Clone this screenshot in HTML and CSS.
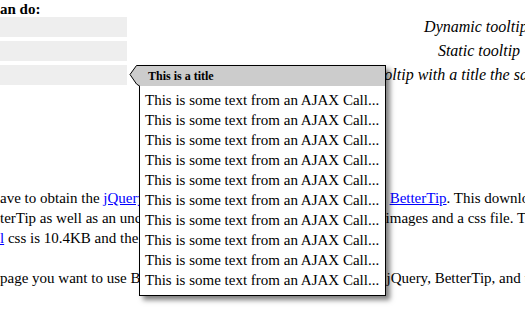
FILE: index.html
```html
<!DOCTYPE html>
<html lang="en">
<head>
    <meta charset="UTF-8">
    <title>BetterTip</title>
<link rel="stylesheet" href="styles.css">
</head>
<body>
    <div class="page">
        <p class="lead">an do:</p>

        <div class="demos">
            <div class="demo-cell"></div>
            <div class="demo-label">Dynamic tooltips</div>
            <div class="demo-cell"></div>
            <div class="demo-label">Static tooltip</div>
            <div class="demo-cell"></div>
            <div class="demo-label">Static tooltip with a title the same as the links.</div>
        </div>

        <div class="usage">
            <p>ave to obtain the <a href="#">jQuery</a> library from the official jQuery site and <a href="#">BetterTip</a>. This download includes a<br>terTip as well as an uncompressed version, along with all of the images and a css file. The compressed<br><a href="#">l</a> css is 10.4KB and the uncompressed version is 22KB.</p>
            <p>page you want to use BetterTip on you will first need to include jQuery, BetterTip, and the css file.</p>
        </div>
    </div>

    <div class="tip">
        <svg class="tip-arrow" width="11" height="22" viewBox="0 0 11 22">
            <polygon points="11,0.5 7.5,0.5 1,9.5 7.5,19 11,21" fill="#cccccc"/>
            <polyline points="11,0.5 7.5,0.5 1,9.5 7.5,19 10.5,21" fill="none" stroke="#000" stroke-width="1"/>
        </svg>
        <div class="tip-title">This is a title</div>
        <div class="tip-body">
            This is some text from an AJAX Call...<br>
            This is some text from an AJAX Call...<br>
            This is some text from an AJAX Call...<br>
            This is some text from an AJAX Call...<br>
            This is some text from an AJAX Call...<br>
            This is some text from an AJAX Call...<br>
            This is some text from an AJAX Call...<br>
            This is some text from an AJAX Call...<br>
            This is some text from an AJAX Call...<br>
            This is some text from an AJAX Call...
        </div>
    </div>
</body>
</html>
```

FILE: styles.css
```css
html, body {
    overflow: hidden;
}

body {
    margin: 0;
    font-family: "Liberation Serif", "Times New Roman", serif;
    font-size: 15px;
    color: #000;
    background: #fff;
}

.page {
    padding-top: 1px;
}

.lead {
    margin: 0;
    font-weight: bold;
    line-height: 16px;
}

.demos {
    display: grid;
    grid-template-columns: 127px 696px;
    column-gap: 4px;
    row-gap: 4px;
}

.demo-cell {
    height: 20px;
    background-color: #eeeeee;
}

.demo-label {
    font-size: 16px;
    line-height: 20px;
    font-style: italic;
    text-align: center;
    white-space: nowrap;
}

.usage {
    margin-top: 103px;
}

.usage p {
    margin: 0 0 20px;
    line-height: 20px;
    white-space: nowrap;
}

a {
    color: #0000ff;
    text-decoration: underline;
}

.tip {
    position: absolute;
    left: 139px;
    top: 65px;
    width: 247px;
    box-sizing: border-box;
    border: 1px solid #000;
    background: #fff;
    box-shadow: 4px 4px 5px rgba(0, 0, 0, 0.5);
}

.tip-arrow {
    position: absolute;
    left: -11px;
    top: -1px;
    display: block;
}

.tip-title {
    height: 20px;
    padding-left: 8px;
    background-color: #cccccc;
    font-size: 12px;
    font-weight: bold;
    line-height: 20px;
}

.tip-body {
    padding: 4px 0 5px 5px;
    line-height: 20px;
    white-space: nowrap;
}
```
